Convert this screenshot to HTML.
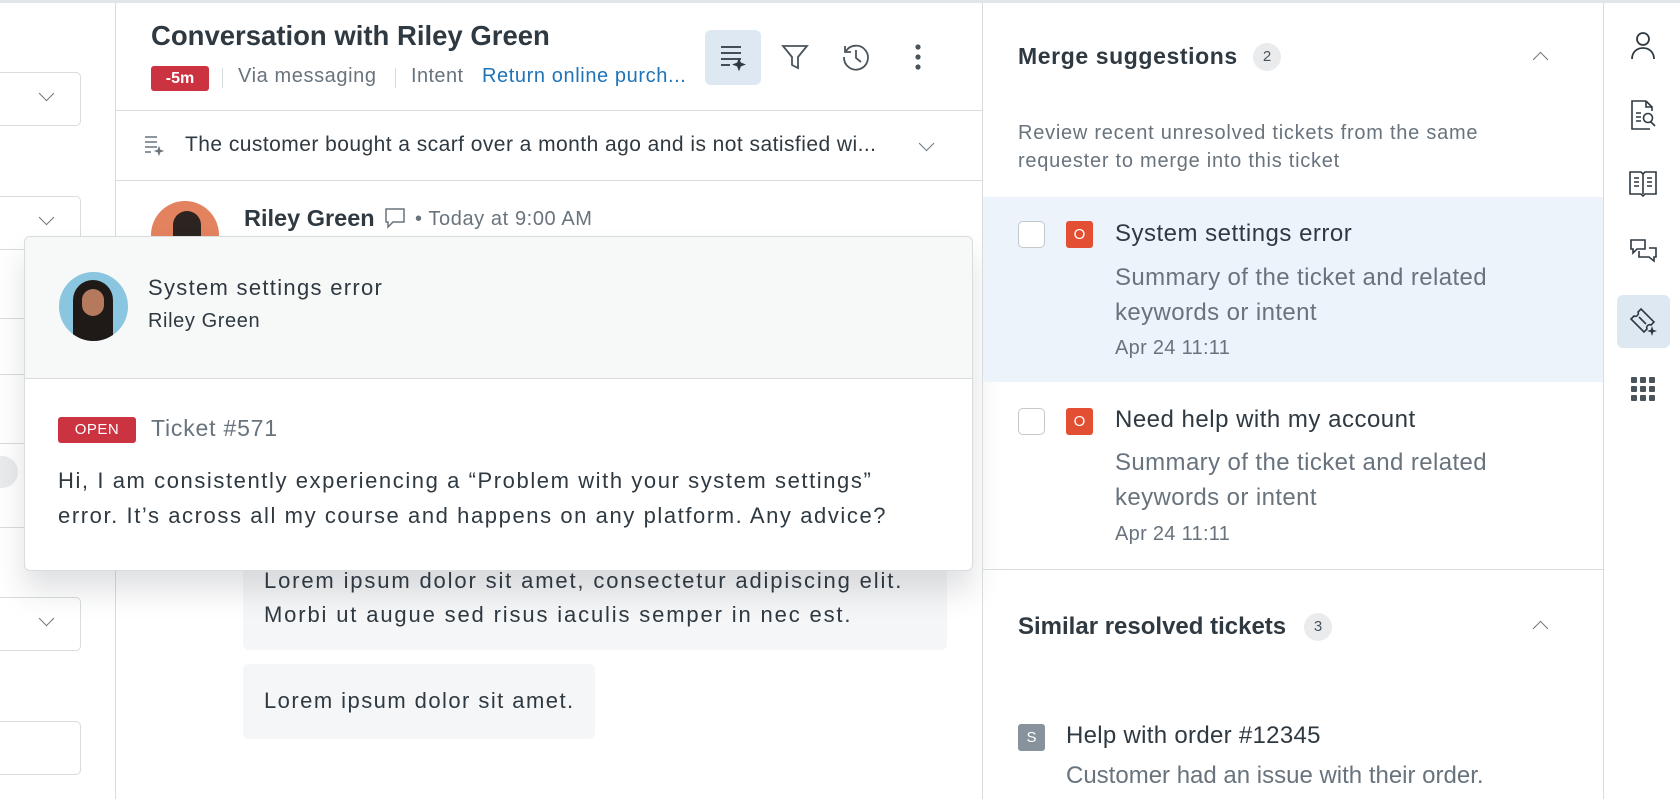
<!DOCTYPE html>
<html><head><meta charset="utf-8"><style>
*{box-sizing:border-box;margin:0;padding:0}
body{width:1680px;height:799px;overflow:hidden;background:#fff;font-family:"Liberation Sans",sans-serif;color:#2f3941;position:relative}
.a{position:absolute;white-space:nowrap}
.box{position:absolute;border:1px solid #d8dcde;border-radius:5px;background:#fff}
.chev{position:absolute;width:11px;height:11px;border-right:1.6px solid #68737d;border-bottom:1.6px solid #68737d;transform:rotate(45deg)}
.chevu{position:absolute;width:11px;height:11px;border-left:1.6px solid #68737d;border-top:1.6px solid #68737d;transform:rotate(45deg)}
.g{color:#68737d}
.cb{position:absolute;width:27px;height:27px;border:1.5px solid #c2c8cc;border-radius:5px;background:#fff}
.ob{position:absolute;width:27px;height:27px;background:#e34f32;border-radius:3px;color:#fff;font-size:15px;text-align:center;line-height:27px}
.cnt{position:absolute;width:28px;height:28px;border-radius:14px;background:#e9ebed;color:#49545c;font-size:15px;text-align:center;line-height:28px}
</style></head><body>
<div class="a" style="left:0;top:0;width:1680px;height:3px;background:#e3e6e8"></div>
<!-- left column -->
<div class="box" style="left:-10px;top:72px;width:91px;height:54px"></div><div class="chev" style="left:41px;top:88px"></div>
<div class="box" style="left:-10px;top:196px;width:91px;height:54px"></div><div class="chev" style="left:41px;top:212px"></div>
<div class="a" style="left:0;top:318px;width:24px;height:1px;background:#d8dcde"></div>
<div class="a" style="left:0;top:374px;width:24px;height:1px;background:#d8dcde"></div>
<div class="a" style="left:-14px;top:456px;width:32px;height:32px;border-radius:16px;background:#e9ebed"></div>
<div class="a" style="left:0;top:443px;width:24px;height:1px;background:#d8dcde"></div>
<div class="a" style="left:0;top:527px;width:24px;height:1px;background:#d8dcde"></div>
<div class="box" style="left:-10px;top:597px;width:91px;height:54px"></div><div class="chev" style="left:41px;top:613px"></div>
<div class="box" style="left:-10px;top:721px;width:91px;height:54px"></div>
<div class="a" style="left:115px;top:3px;width:1px;height:796px;background:#d8dcde"></div>
<!-- middle -->
<div class="a" style="left:151px;top:20px;font-size:27.5px;font-weight:bold;color:#2f3941">Conversation with Riley Green</div>
<div class="a" style="left:151px;top:66px;width:58px;height:25px;background:#cc3340;border-radius:3px;color:#fff;font-size:16px;font-weight:bold;text-align:center;line-height:25px">-5m</div>
<div class="a" style="left:222px;top:68px;width:1px;height:20px;background:#d8dcde"></div>
<div class="a g" style="left:238px;top:65px;font-size:20px;letter-spacing:.6px">Via messaging</div>
<div class="a" style="left:395px;top:68px;width:1px;height:20px;background:#d8dcde"></div>
<div class="a g" style="left:411px;top:65px;font-size:20px;letter-spacing:.4px">Intent</div>
<div class="a" style="left:482px;top:65px;font-size:20px;letter-spacing:.6px;color:#1f73b7">Return online purch...</div>
<div class="a" style="left:705px;top:30px;width:56px;height:55px;background:#dde8f3;border-radius:6px"></div>
<svg class="a" style="left:718px;top:43px" width="30" height="30" viewBox="0 0 30 30" fill="none" stroke="#2f3941" stroke-width="1.8"><path d="M3 4h20M3 10h20M3 16h20M3 22h9"/><path d="M21 16l1.5 4 4 1.5-4 1.5-1.5 4-1.5-4-4-1.5 4-1.5z" fill="#2f3941" stroke-width="1"/></svg>
<svg class="a" style="left:780px;top:42px" width="30" height="30" viewBox="0 0 30 30" fill="none" stroke="#49545c" stroke-width="1.8"><path d="M3 4h24L18 15v11l-6-3v-8z"/></svg>
<svg class="a" style="left:841px;top:42px" width="30" height="30" viewBox="0 0 30 30" fill="none" stroke="#49545c" stroke-width="1.8"><path d="M5 9A12 12 0 1 1 3 15"/><path d="M4 4v6h6"/><path d="M15 8v8l5 4"/></svg>
<svg class="a" style="left:912px;top:43px" width="12" height="30" viewBox="0 0 12 30" fill="#49545c"><circle cx="6" cy="4" r="2.6"/><circle cx="6" cy="14" r="2.6"/><circle cx="6" cy="24" r="2.6"/></svg>
<div class="a" style="left:115px;top:110px;width:867px;height:1px;background:#d8dcde"></div>
<svg class="a" style="left:144px;top:135px" width="22" height="22" viewBox="0 0 22 22" fill="none" stroke="#68737d" stroke-width="1.5"><path d="M1 2h12M1 7h12M1 12h12M1 17h6"/><path d="M15 12l1 3 3 1-3 1-1 3-1-3-3-1 3-1z" fill="#68737d" stroke-width="0.8"/></svg>
<div class="a" style="left:185px;top:133px;font-size:21px;letter-spacing:.45px;color:#2f3941">The customer bought a scarf over a month ago and is not satisfied wi...</div>
<div class="chev" style="left:921px;top:138px"></div>
<div class="a" style="left:115px;top:180px;width:867px;height:1px;background:#d8dcde"></div>
<div class="a" style="left:151px;top:201px;width:68px;height:68px;border-radius:34px;background:#e3825f;overflow:hidden"><div style="position:absolute;left:22px;top:10px;width:28px;height:60px;border-radius:14px;background:#2b2420"></div></div>
<div class="a" style="left:244px;top:205px;font-size:23.5px;font-weight:bold">Riley Green</div>
<svg class="a" style="left:384px;top:207px" width="22" height="24" viewBox="0 0 22 24" fill="none" stroke="#68737d" stroke-width="1.5"><path d="M2 2h18v13H9l-5 5V15H2z"/></svg>
<div class="a g" style="left:415px;top:208px;font-size:20px;letter-spacing:.6px">• Today at 9:00 AM</div>
<div class="a" style="left:243px;top:555px;width:704px;height:95px;background:#f5f6f7;border-radius:6px"></div>
<div class="a" style="left:264px;top:564px;font-size:22px;letter-spacing:1.85px;line-height:34px">Lorem ipsum dolor sit amet, consectetur adipiscing elit.<br>Morbi ut augue sed risus iaculis semper in nec est.</div>
<div class="a" style="left:243px;top:664px;width:352px;height:75px;background:#f5f6f7;border-radius:6px"></div>
<div class="a" style="left:264px;top:688px;font-size:22px;letter-spacing:1.45px">Lorem ipsum dolor sit amet.</div>
<!-- popup -->
<div class="a" style="left:24px;top:236px;width:949px;height:335px;background:#fff;border:1px solid #d8dcde;border-radius:6px;box-shadow:0 20px 30px rgba(47,57,65,.15);overflow:hidden">
 <div style="position:absolute;left:0;top:0;width:100%;height:142px;background:#f7f8f8;border-bottom:1px solid #d8dcde"></div>
 <div style="position:absolute;left:34px;top:35px;width:69px;height:69px;border-radius:35px;background:#8ac6df;overflow:hidden"><div style="position:absolute;left:14px;top:8px;width:40px;height:70px;border-radius:20px 20px 0 0;background:#1f1a18"></div><div style="position:absolute;left:23px;top:17px;width:22px;height:27px;border-radius:11px;background:#b57a5d"></div></div>
 <div style="position:absolute;left:123px;top:38px;font-size:22px;letter-spacing:1.3px">System settings error</div>
 <div style="position:absolute;left:123px;top:73px;font-size:20px;letter-spacing:.6px">Riley Green</div>
 <div style="position:absolute;left:33px;top:180px;width:78px;height:26px;background:#cc3340;border-radius:3px;color:#fff;font-size:15px;text-align:center;line-height:26px;letter-spacing:.5px">OPEN</div>
 <div class="g" style="position:absolute;left:126px;top:178px;font-size:23px;letter-spacing:.8px">Ticket #571</div>
 <div style="position:absolute;left:33px;top:226px;font-size:22px;letter-spacing:1.58px;line-height:35px">Hi, I am consistently experiencing a “Problem with your system settings”<br>error. It’s across all my course and happens on any platform. Any advice?</div>
</div>
<!-- right panel -->
<div class="a" style="left:982px;top:3px;width:1px;height:796px;background:#d8dcde"></div>
<div class="a" style="left:1018px;top:43px;font-size:23px;letter-spacing:.6px;font-weight:bold">Merge suggestions</div>
<div class="cnt" style="left:1253px;top:43px">2</div>
<div class="chevu" style="left:1535px;top:54px"></div>
<div class="a g" style="left:1018px;top:119px;font-size:20px;letter-spacing:.75px;line-height:28px">Review recent unresolved tickets from the same<br>requester to merge into this ticket</div>
<div class="a" style="left:983px;top:197px;width:620px;height:185px;background:#edf3fa"></div>
<div class="cb" style="left:1018px;top:221px"></div><div class="ob" style="left:1066px;top:221px">O</div>
<div class="a" style="left:1115px;top:220px;font-size:24px;letter-spacing:.5px">System settings error</div>
<div class="a g" style="left:1115px;top:260px;font-size:24px;letter-spacing:.4px;line-height:35px">Summary of the ticket and related<br>keywords or intent</div>
<div class="a g" style="left:1115px;top:337px;font-size:20px;letter-spacing:.3px">Apr 24 11:11</div>
<div class="cb" style="left:1018px;top:408px"></div><div class="ob" style="left:1066px;top:408px">O</div>
<div class="a" style="left:1115px;top:406px;font-size:24px;letter-spacing:.5px">Need help with my account</div>
<div class="a g" style="left:1115px;top:445px;font-size:24px;letter-spacing:.4px;line-height:35px">Summary of the ticket and related<br>keywords or intent</div>
<div class="a g" style="left:1115px;top:523px;font-size:20px;letter-spacing:.3px">Apr 24 11:11</div>
<div class="a" style="left:983px;top:569px;width:620px;height:1px;background:#d8dcde"></div>
<div class="a" style="left:1018px;top:613px;font-size:24px;font-weight:bold">Similar resolved tickets</div>
<div class="cnt" style="left:1304px;top:613px">3</div>
<div class="chevu" style="left:1535px;top:623px"></div>
<div class="a" style="left:1018px;top:724px;width:27px;height:27px;background:#87929d;border-radius:3px;color:#fff;font-size:15px;text-align:center;line-height:27px">S</div>
<div class="a" style="left:1066px;top:722px;font-size:24px;letter-spacing:.3px">Help with order #12345</div>
<div class="a g" style="left:1066px;top:762px;font-size:24px;letter-spacing:0">Customer had an issue with their order.</div>
<!-- sidebar -->
<div class="a" style="left:1603px;top:3px;width:1px;height:796px;background:#d8dcde"></div>
<svg class="a" style="left:1630px;top:31px" width="26" height="30" viewBox="0 0 26 30" fill="none" stroke="#2f3941" stroke-width="1.8"><circle cx="13" cy="8" r="6"/><path d="M2 28c0-7 5-11 11-11s11 4 11 11"/></svg>
<svg class="a" style="left:1628px;top:99px" width="30" height="32" viewBox="0 0 30 32" fill="none" stroke="#2f3941" stroke-width="1.6"><path d="M18 2H4v28h18"/><path d="M18 2l6 6v4M18 2v6h6"/><path d="M8 14h5M8 18h5M8 22h5"/><circle cx="20" cy="19" r="4.5"/><path d="M23 23l4 4"/></svg>
<svg class="a" style="left:1628px;top:169px" width="30" height="30" viewBox="0 0 30 30" fill="none" stroke="#2f3941" stroke-width="1.6"><path d="M2 3h11l2 2 2-2h11v22H17l-2 2-2-2H2z"/><path d="M15 5v20M6 9h5M6 13h5M6 17h5M19 9h5M19 13h5M19 17h5"/></svg>
<svg class="a" style="left:1628px;top:237px" width="30" height="30" viewBox="0 0 30 30" fill="none" stroke="#2f3941" stroke-width="1.6"><path d="M3 3h14v9H9l-4 4v-4H3z"/><path d="M11 14v6h10l5 4v-4h2V11h-7"/></svg>
<div class="a" style="left:1617px;top:295px;width:53px;height:53px;background:#dde8f3;border-radius:6px"></div>
<svg class="a" style="left:1628px;top:306px" width="30" height="30" viewBox="0 0 30 30" fill="none" stroke="#2f3941" stroke-width="1.6"><path d="M13 3l13 13-3 3a3 3 0 0 0-4 4l-3 3L3 13l3-3a3 3 0 0 0 4-4z"/><path d="M11 11l7 7"/><path d="M24 21l1 3 3 1-3 1-1 3-1-3-3-1 3-1z" fill="#2f3941" stroke-width="0.6"/></svg>
<svg class="a" style="left:1631px;top:377px" width="24" height="24" viewBox="0 0 24 24" fill="#49545c"><rect x="0" y="0" width="6" height="6" rx="1"/><rect x="9" y="0" width="6" height="6" rx="1"/><rect x="18" y="0" width="6" height="6" rx="1"/><rect x="0" y="9" width="6" height="6" rx="1"/><rect x="9" y="9" width="6" height="6" rx="1"/><rect x="18" y="9" width="6" height="6" rx="1"/><rect x="0" y="18" width="6" height="6" rx="1"/><rect x="9" y="18" width="6" height="6" rx="1"/><rect x="18" y="18" width="6" height="6" rx="1"/></svg>
</body></html>
